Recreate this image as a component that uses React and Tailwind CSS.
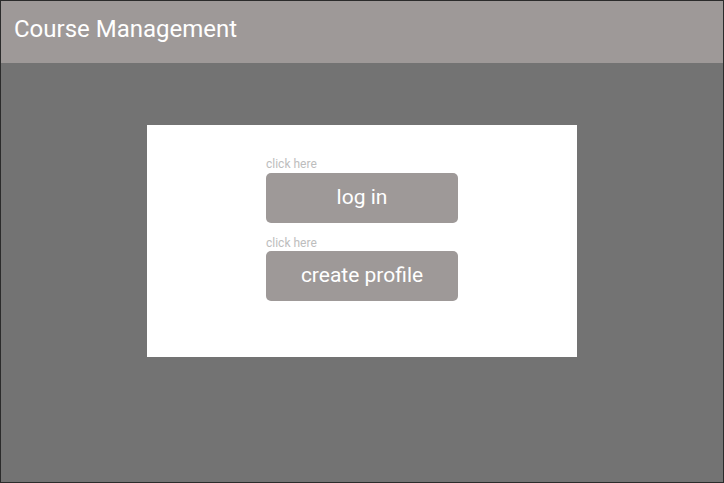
export default function App() {
  return (
    <div className="w-[724px] h-[483px] border border-[#2b2b2b] bg-[#737373] flex flex-col font-['Roboto',sans-serif]">
      <header className="h-[62px] bg-[#9e9998] flex items-center pl-[13px] pb-[6px] shrink-0">
        <h1 className="text-[24px] text-white leading-none">Course Management</h1>
      </header>

      <main className="flex-1 flex justify-center pt-[62px]">
        <div className="w-[430px] h-[232px] bg-white flex flex-col items-center pt-[32px]">
          <div className="w-[192px]">
            <p className="text-[12px] leading-[14px] text-[#bdbdbd] mb-[2px]">click here</p>
            <button className="w-full h-[50px] rounded-[5px] bg-[#9e9998] text-white text-[21px] pb-[1px]">
              log in
            </button>
            <p className="text-[12px] leading-[14px] text-[#bdbdbd] mt-[13px] mb-[1px]">click here</p>
            <button className="w-full h-[50px] rounded-[5px] bg-[#9e9998] text-white text-[21px] pb-[1px]">
              create profile
            </button>
          </div>
        </div>
      </main>
    </div>
  )
}
